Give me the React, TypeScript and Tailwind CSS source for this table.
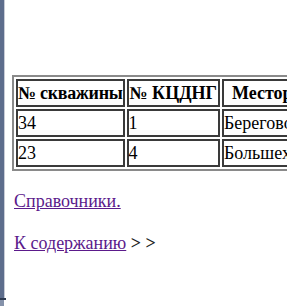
import * as React from 'react';

const rows = [
  { well: '34', shop: '1', field: 'Береговое' },
  { well: '23', shop: '4', field: 'Большехетское' },
];

export default function App() {
  return (
    <div className="flex h-[306px] w-[287px] overflow-hidden bg-white font-['Liberation_Serif',serif] text-[18px] leading-[20px] text-black">
      {/* left window frame */}
      <div className="flex w-[6px] shrink-0 flex-col">
        <div className="flex flex-1">
          <div className="w-[4px] bg-[#5d6d8c]" />
          <div className="w-[1px] bg-[#c8ccd6]" />
          <div className="w-[1px] bg-white" />
        </div>
        <div className="h-[2px] bg-[#2e3a50]" />
        <div className="flex h-[6px]">
          <div className="w-[4px] bg-[#8592aa]" />
          <div className="w-[2px] bg-white" />
        </div>
      </div>

      <div className="min-w-0 flex-1 pl-[6px]">
        <table className="mt-[75px] border-separate border-spacing-[2px] border-2 border-[#8a8a8a] whitespace-nowrap">
          <thead>
            <tr>
              <th className="h-[28px] w-[110px] border-2 border-[#3a3a3a] px-0 text-left font-bold tracking-[-0.3px]">№ скважины</th>
              <th className="w-[91px] border-2 border-[#3a3a3a] px-[1px] text-left font-bold">№ КЦДНГ</th>
              <th className="w-[146px] border-2 border-[#3a3a3a] px-[8px] text-center font-bold">Месторождение</th>
            </tr>
          </thead>
          <tbody>
            {rows.map((r) => (
              <tr key={r.well}>
                <td className="h-[28px] border-2 border-[#3a3a3a] px-0 text-left">{r.well}</td>
                <td className="border-2 border-[#3a3a3a] px-0 text-left">{r.shop}</td>
                <td className="border-2 border-[#3a3a3a] px-0 text-left">{r.field}</td>
              </tr>
            ))}
          </tbody>
        </table>

        <p className="mt-[20px] pl-[2px]">
          <a href="#" className="text-[#5b1a8b] underline">Справочники.</a>
        </p>
        <p className="mt-[22px] pl-[2px]">
          <a href="#" className="text-[#5b1a8b] underline">К содержанию</a> <span className="font-bold text-[#222]">&gt; &gt;</span>
        </p>
      </div>
    </div>
  );
}
